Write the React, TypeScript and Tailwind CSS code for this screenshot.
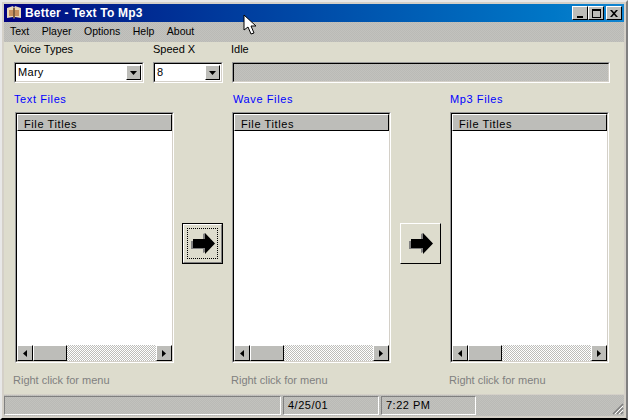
const uiFont = { fontFamily: '"Liberation Sans", Arial, sans-serif' };

function Sunken({ className, children }: { className: string; children: React.ReactNode }) {
  return (
    <div className={`border border-t-[#989898] border-l-[#989898] border-b-white border-r-white ${className}`}>
      <div className="flex h-full w-full min-h-0 flex-col border border-t-black border-l-black border-b-[#d4d0c8] border-r-[#d4d0c8]">{children}</div>
    </div>
  );
}

function Raised({ className, children }: { className: string; children?: React.ReactNode }) {
  return (
    <div className={`flex items-center justify-center border border-t-white border-l-white border-b-black border-r-black bg-[#bdbdb9] ${className}`}>
      {children}
    </div>
  );
}

function Combo({ value, width }: { value: string; width: string }) {
  return (
    <Sunken className={`h-[21px] ${width}`}>
      <div className="flex h-full items-center bg-white pl-[2px] pr-px">
        <span className="flex-1 text-[11px] tracking-[0.3px] text-black">{value}</span>
        <Raised className="h-[15px] w-[15px]">
          <svg width="7" height="4" viewBox="0 0 7 4"><path d="M0 0h7L3.5 4z" fill="#000" /></svg>
        </Raised>
      </div>
    </Sunken>
  );
}

function FileList() {
  return (
    <Sunken className="h-[251px] w-[159px]">
      <Raised className="h-[17px] shrink-0 !justify-start pt-[3px] pl-[6px] text-[11px] tracking-[0.6px] text-black">File Titles</Raised>
      <div className="flex-1 bg-white" />
      <div className="flex h-[16px] shrink-0 bg-[repeating-conic-gradient(#bdbdb9_0%_25%,#ffffff_0%_50%)] bg-[length:2px_2px]">
        <Raised className="w-[16px] shrink-0">
          <svg width="4" height="7" viewBox="0 0 4 7"><path d="M4 0v7L0 3.5z" fill="#000" /></svg>
        </Raised>
        <Raised className="w-[34px] shrink-0" />
        <div className="flex-1" />
        <Raised className="w-[16px] shrink-0">
          <svg width="4" height="7" viewBox="0 0 4 7"><path d="M0 0v7L4 3.5z" fill="#000" /></svg>
        </Raised>
      </div>
    </Sunken>
  );
}

function ArrowIcon() {
  return (
    <svg width="24" height="22" viewBox="0 0 24 22">
      <path d="M0 8h12V1l2-1v19l-2 1v-4H0z" fill="#808080" />
      <path d="M2 6h12V0l10 10.5L14 21v-6H2z" fill="#000" />
    </svg>
  );
}

function ArrowButton({ focused }: { focused?: boolean }) {
  if (focused) {
    return (
      <div className="border border-black">
        <div className="flex h-[39px] w-[39px] items-center justify-center border border-t-white border-l-white border-b-[#808080] border-r-[#808080] bg-[#dddccd]">
          <div className="flex h-[31px] w-[31px] items-center justify-center border border-dotted border-black">
            <ArrowIcon />
          </div>
        </div>
      </div>
    );
  }
  return (
    <div className="flex h-[41px] w-[41px] items-center justify-center border border-t-white border-l-white border-b-black border-r-black bg-[#dddccd]">
      <ArrowIcon />
    </div>
  );
}

function FileColumn({ title, labelClass, hintClass }: { title: string; labelClass: string; hintClass: string }) {
  return (
    <div className="w-[159px]">
      <div className={`mb-[5px] h-[15px] text-[11px] leading-[15px] tracking-[0.6px] text-[#0000ff] ${labelClass}`}>{title}</div>
      <FileList />
      <div className={`mt-[10px] h-[14px] text-[11px] leading-[14px] whitespace-nowrap text-[#808080] ${hintClass}`}>Right click for menu</div>
    </div>
  );
}

function CaptionButton({ children, className }: { children: React.ReactNode; className?: string }) {
  return <Raised className={`h-[14px] w-[16px] ${className ?? ''}`}>{children}</Raised>;
}

export default function App() {
  return (
    <div className="relative flex h-[420px] w-[628px] flex-col overflow-hidden border-2 border-t-[#e8e8e8] border-l-[#e8e8e8] border-b-black border-r-[#808080] bg-[#d4d0c8] p-[2px] select-none" style={uiFont}>
      {/* title bar */}
      <div className="flex h-[18px] shrink-0 items-center bg-gradient-to-r from-[#000080] to-[#1084d0] pr-[2px] pl-[2px]">
        <svg width="16" height="16" viewBox="0 0 16 16" className="mr-[3px] shrink-0">
          <path d="M1 3l6-2 1 2 1-2 6 2v10l-6-1-1 2-1-2-6 1z" fill="#e8d8b8" />
          <path d="M3 5l4 0 0 6-4 0zM9 5h4v6H9z" fill="#c89060" />
          <path d="M7 3h2v10H7z" fill="#806040" />
        </svg>
        <span className="flex-1 text-[12px] font-bold tracking-[0.2px] whitespace-nowrap text-white">Better - Text To Mp3</span>
        <CaptionButton>
          <span className="mt-[7px] mr-px h-[2px] w-[6px] bg-black" />
        </CaptionButton>
        <CaptionButton>
          <span className="h-[9px] w-[9px] border border-t-2 border-black" />
        </CaptionButton>
        <CaptionButton className="ml-[2px]">
          <svg width="8" height="7" viewBox="0 0 8 7"><path d="M0 0h2l2 2.3L6 0h2L5 3.5 8 7H6L4 4.7 2 7H0l3-3.5z" fill="#000" /></svg>
        </CaptionButton>
      </div>

      {/* menu */}
      <div className="flex h-[20px] shrink-0 items-center gap-[12.5px] bg-[repeating-conic-gradient(#c2c2be_0%_25%,#babab6_0%_50%)] bg-[length:2px_2px] pl-[6px] text-[10.5px] text-black">
        <span>Text</span>
        <span>Player</span>
        <span>Options</span>
        <span>Help</span>
        <span>About</span>
      </div>

      {/* form */}
      <div className="flex min-h-0 flex-1 flex-col bg-[#dddccd] pt-[1px] pl-[10px]">
        <div className="flex h-[19px] text-[11px] leading-[13px] text-black">
          <span className="w-[139px]">Voice Types</span>
          <span className="w-[78px]">Speed X</span>
          <span>Idle</span>
        </div>
        <div className="flex gap-[9px]">
          <Combo value="Mary" width="w-[130px]" />
          <Combo value="8" width="w-[70px]" />
          <Sunken className="h-[21px] w-[378px]">
            <div className="h-full bg-[repeating-conic-gradient(#c2c2be_0%_25%,#babab6_0%_50%)] bg-[length:2px_2px]" />
          </Sunken>
        </div>

        <div className="mt-[9px] flex items-start pl-[1px]">
          <FileColumn title="Text Files" labelClass="-ml-px" hintClass="-ml-[2px]" />
          <div className="mt-[131px] ml-[8px] mr-[9px]"><ArrowButton focused /></div>
          <FileColumn title="Wave Files" labelClass="ml-px" hintClass="-ml-px" />
          <div className="mt-[131px] ml-[9px] mr-[9px]"><ArrowButton /></div>
          <FileColumn title="Mp3 Files" labelClass="ml-0" hintClass="-ml-px" />
        </div>
      </div>

      {/* status bar */}
      <div className="flex h-[22px] shrink-0 items-center gap-[2px] border-t border-[#d4d0c8] bg-[repeating-conic-gradient(#c2c2be_0%_25%,#babab6_0%_50%)] bg-[length:2px_2px] pb-[1px] text-[11px] tracking-[0.5px] text-black">
        <div className="h-[19px] w-[277px] border border-t-[#808080] border-l-[#808080] border-b-white border-r-white" />
        <div className="flex h-[19px] w-[96px] items-center border border-t-[#808080] border-l-[#808080] border-b-white border-r-white pl-[4px]">4/25/01</div>
        <div className="flex h-[19px] w-[95px] items-center border border-t-[#808080] border-l-[#808080] border-b-white border-r-white pl-[4px]">7:22 PM</div>
        <div className="flex-1" />
        <svg width="12" height="12" viewBox="0 0 12 12" className="self-end">
          <path d="M11 1L1 11M11 5L5 11M11 9L9 11" stroke="#808080" strokeWidth="1.5" />
          <path d="M11 3L3 11M11 7L7 11" stroke="#fff" strokeWidth="1" />
        </svg>
      </div>

      {/* mouse pointer */}
      <svg width="14" height="21" viewBox="0 0 14 21" className="absolute top-[12px] left-[241px]">
        <path d="M1 1v15l4-3 3 7 3-1-3-7h5z" fill="#fff" stroke="#000" strokeWidth="1" />
      </svg>
    </div>
  );
}
